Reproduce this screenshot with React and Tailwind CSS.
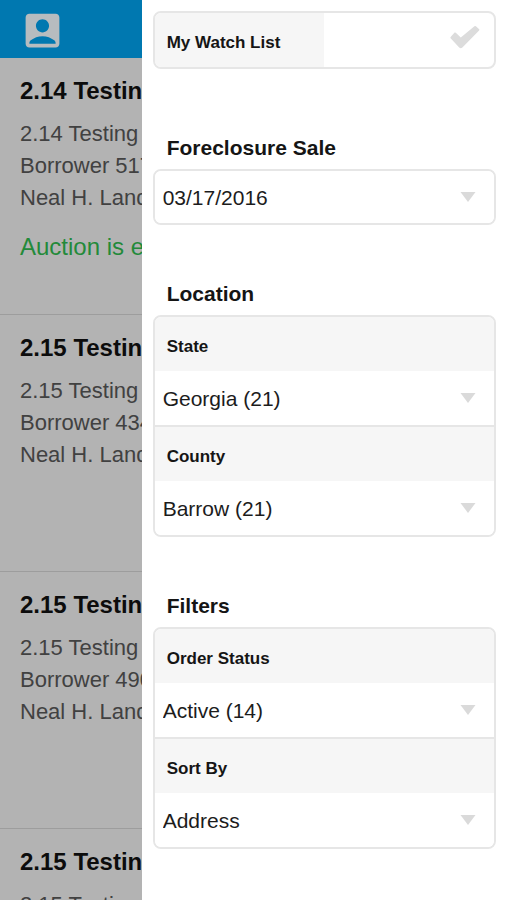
import { useState } from 'react';
import { MdAccountBox } from 'react-icons/md';

const orders = [
  { title: '2.14 Testing', lines: ['2.14 Testing', 'Borrower 517', 'Neal H. Landers'], notice: 'Auction is ending' },
  { title: '2.15 Testing', lines: ['2.15 Testing', 'Borrower 434', 'Neal H. Landers'] },
  { title: '2.15 Testing', lines: ['2.15 Testing', 'Borrower 490', 'Neal H. Landers'] },
  { title: '2.15 Testing', lines: ['2.15 Testing', 'Borrower 492', 'Neal H. Landers'] },
];

function OrderRow({ order }) {
  return (
    <li className="h-[257px] border-b border-[#9d9d9d] pl-5 pt-[17px] whitespace-nowrap">
      <h2 className="text-[24px] leading-8 font-bold text-[#0c0c0c]">{order.title}</h2>
      <div className="mt-[11px] text-[22px] leading-8 text-[#414141]">
        {order.lines.map((line) => (
          <p key={line}>{line}</p>
        ))}
      </div>
      {order.notice && <p className="mt-[17px] text-[24px] leading-8 text-[#238a3a]">{order.notice}</p>}
    </li>
  );
}

function Select({ id, label, options, className }) {
  return (
    <div className="relative">
      <select
        id={id}
        aria-label={label}
        className={`block w-full appearance-none bg-white pl-2 pr-10 pt-0.5 text-[21px] text-[#1c1c1c] outline-none ${className}`}
      >
        {options.map((option) => (
          <option key={option}>{option}</option>
        ))}
      </select>
      <svg
        viewBox="0 0 16 10"
        className="pointer-events-none absolute right-[18px] top-1/2 h-[10px] w-4 -translate-y-1/2 fill-[#dadada]"
      >
        <path d="M0.5 0h15L8 10z" />
      </svg>
    </div>
  );
}

function Field({ id, label, options }) {
  return (
    <div>
      <label htmlFor={id} className="flex h-[54px] items-center bg-[#f6f6f6] pl-3 pt-1.5 text-[17px] font-bold text-[#151515]">
        {label}
      </label>
      <Select id={id} options={options} className="h-[54px]" />
    </div>
  );
}

function Section({ title, children }) {
  return (
    <section>
      <h3 className="mb-1.5 px-3.5 text-[21px] leading-[30px] font-bold text-[#151515]">{title}</h3>
      <div className="divide-y-2 divide-[#e6e6e6] overflow-hidden rounded-lg border-2 border-[#e6e6e6]">{children}</div>
    </section>
  );
}

function WatchList() {
  const [checked, setChecked] = useState(false);

  return (
    <label className="relative flex h-[58px] items-stretch overflow-hidden rounded-lg border-2 border-[#e6e6e6]">
      <span className="flex w-1/2 items-center bg-[#f6f6f6] pl-3 pt-1.5 text-[17px] font-bold text-[#151515]">My Watch List</span>
      <input
        type="checkbox"
        className="peer sr-only"
        checked={checked}
        onChange={(e) => setChecked(e.target.checked)}
      />
      <span className="flex flex-1 items-start justify-end pr-3.5 pt-3 text-[#dcdcdc] peer-checked:text-[#0078b0]">
        <svg viewBox="0 0 30 24" className="h-6 w-[30px] fill-current">
          <path d="M0.6 12 4.6 7.6Q5.2 7.2 5.8 7.7L10.8 12.6 24.4 1.2Q25.2 0.7 25.9 1.3L29.2 4.2Q29.7 4.8 29.1 5.4L12.4 22.6Q10.8 23.8 9.2 22.6L0.6 13.2Q0.1 12.6 0.6 12z" />
        </svg>
      </span>
    </label>
  );
}

export default function App() {
  return (
    <div className="flex h-screen overflow-hidden bg-white font-['Liberation_Sans',Arial,sans-serif]">
      <main className="w-[28%] shrink-0 overflow-hidden bg-[#b3b3b3]">
        <header className="flex h-[58px] items-center bg-[#0078b0] pl-5 pt-0.5">
          <button type="button" aria-label="Account">
            <MdAccountBox className="size-[45px] text-[#b7bcbf]" />
          </button>
        </header>
        <ul>
          {orders.map((order, i) => (
            <OrderRow key={i} order={order} />
          ))}
        </ul>
      </main>

      <aside className="min-w-0 flex-1 pl-[11px] pr-2.5 pt-[11px]">
        <WatchList />
        <div className="mt-16 flex flex-col gap-[54px]">
          <Section title="Foreclosure Sale">
            <Select id="sale-date" label="Foreclosure Sale" options={['03/17/2016']} className="h-[52px]" />
          </Section>
          <Section title="Location">
            <Field id="state" label="State" options={['Georgia (21)']} />
            <Field id="county" label="County" options={['Barrow (21)']} />
          </Section>
          <Section title="Filters">
            <Field id="status" label="Order Status" options={['Active (14)']} />
            <Field id="sort" label="Sort By" options={['Address']} />
          </Section>
        </div>
      </aside>
    </div>
  );
}
